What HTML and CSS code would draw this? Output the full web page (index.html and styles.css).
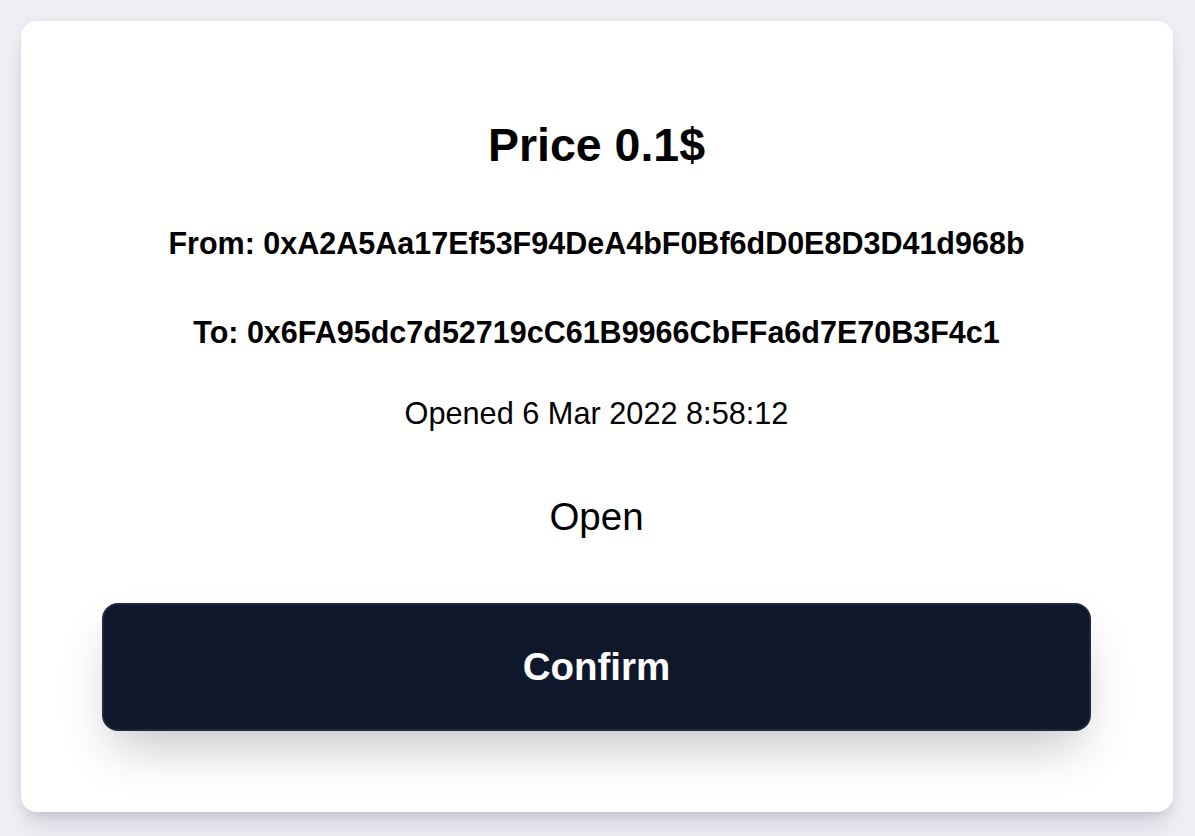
FILE: index.html
```html
<!DOCTYPE html>
<html lang="en">
<head>
<meta charset="utf-8">
<title>Order</title>
<link rel="stylesheet" href="styles.css">
</head>
<body>
<main class="card">
  <h1 class="price">Price 0.1$</h1>
  <p class="addr addr-from">From: 0xA2A5Aa17Ef53F94DeA4bF0Bf6dD0E8D3D41d968b</p>
  <p class="addr addr-to">To: 0x6FA95dc7d52719cC61B9966CbFFa6d7E70B3F4c1</p>
  <p class="opened">Opened 6 Mar 2022 8:58:12</p>
  <p class="status">Open</p>
  <button class="confirm" type="button">Confirm</button>
</main>
</body>
</html>
```

FILE: styles.css
```css
* { box-sizing: border-box; }
html, body { margin: 0; padding: 0; }
body {
  background: #eff0f5;
  font-family: "Liberation Sans", Arial, Helvetica, sans-serif;
  color: #000;
  padding: 21px 22px 24px 21px;
  min-height: 836px;
}
.card {
  background: #fff;
  border-radius: 16px;
  box-shadow: 0 20px 25px -5px rgba(15, 23, 42, 0.10), 0 8px 10px -6px rgba(15, 23, 42, 0.10), 0 0 18px rgba(15, 23, 42, 0.06);
  height: 791px;
  padding: 97px 82px 81px 81px;
  display: flex;
  flex-direction: column;
  align-items: center;
  text-align: center;
}
.price {
  margin: 0;
  font-size: 46.5px;
  line-height: 54px;
  font-weight: 700;
}
.addr {
  margin: 53px 0 0;
  font-size: 30.5px;
  line-height: 36px;
  font-weight: 700;
}
.opened {
  margin: 46px 0 0;
  font-size: 30.7px;
  line-height: 36px;
}
.status {
  margin: 62px 0 0;
  font-size: 38.5px;
  line-height: 45px;
}
.confirm {
  margin-top: 64px;
  width: 100%;
  height: 128px;
  background: #0f172a;
  color: #fff;
  border: 2px solid #1e293b;
  border-radius: 16px;
  font-family: inherit;
  font-size: 38.5px;
  font-weight: 700;
  box-shadow: 0 25px 50px -12px rgba(0, 0, 0, 0.25);
  cursor: pointer;
}
```
